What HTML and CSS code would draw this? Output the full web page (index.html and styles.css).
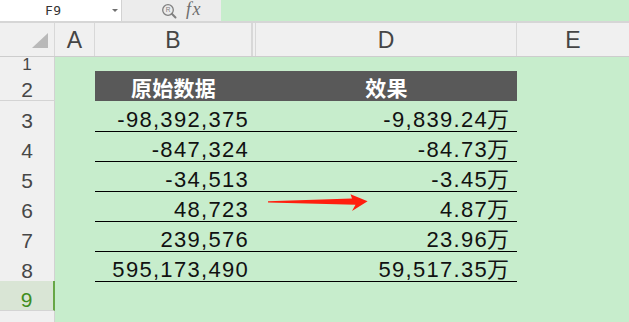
FILE: index.html
```html
<!DOCTYPE html>
<html>
<head>
<meta charset="utf-8">
<link rel="stylesheet" href="styles.css">
</head>
<body>
<div class="fbar">
  <div class="namebox"><span class="ref">F9</span><span class="dd"></span></div>
  <div class="tools">
    <svg class="mag" width="17" height="16" viewBox="0 0 17 16">
      <circle cx="7" cy="7" r="5.3" fill="none" stroke="#808080" stroke-width="1.3"/>
      <text x="7" y="9.3" font-size="6.5" font-family="Liberation Sans, sans-serif" text-anchor="middle" fill="#808080">R</text>
      <line x1="10.8" y1="10.8" x2="14.5" y2="14.5" stroke="#808080" stroke-width="2" stroke-linecap="round"/>
    </svg>
    <span class="fx">fx</span>
  </div>
  <div class="finput"></div>
</div>
<div class="sheet">
  <div class="row colhead">
    <div class="corner"><span class="tri"></span></div>
    <div class="ch">A</div>
    <div class="ch">B</div>
    <div class="ch hid"></div>
    <div class="ch">D</div>
    <div class="ch last">E</div>
  </div>
  <div class="row r1">
    <div class="rh">1</div><div class="c"></div><div class="c"></div><div class="c"></div><div class="c"></div><div class="c"></div>
  </div>
  <div class="row">
    <div class="rh">2</div><div class="c"></div>
    <div class="c hd">原始数据</div><div class="c hd"></div><div class="c hd">效果</div><div class="c"></div>
  </div>
  <div class="row">
    <div class="rh">3</div><div class="c"></div>
    <div class="c ul num">-98,392,375</div><div class="c ul"></div><div class="c ul num dnum">-9,839.24<span class="wan">万</span></div><div class="c"></div>
  </div>
  <div class="row">
    <div class="rh">4</div><div class="c"></div>
    <div class="c ul num">-847,324</div><div class="c ul"></div><div class="c ul num dnum">-84.73<span class="wan">万</span></div><div class="c"></div>
  </div>
  <div class="row">
    <div class="rh">5</div><div class="c"></div>
    <div class="c ul num">-34,513</div><div class="c ul"></div><div class="c ul num dnum">-3.45<span class="wan">万</span></div><div class="c"></div>
  </div>
  <div class="row">
    <div class="rh">6</div><div class="c"></div>
    <div class="c ul num">48,723</div><div class="c ul"></div><div class="c ul num dnum">4.87<span class="wan">万</span></div><div class="c"></div>
  </div>
  <div class="row">
    <div class="rh">7</div><div class="c"></div>
    <div class="c ul num">239,576</div><div class="c ul"></div><div class="c ul num dnum">23.96<span class="wan">万</span></div><div class="c"></div>
  </div>
  <div class="row">
    <div class="rh">8</div><div class="c"></div>
    <div class="c ul num">595,173,490</div><div class="c ul"></div><div class="c ul num dnum">59,517.35<span class="wan">万</span></div><div class="c"></div>
  </div>
  <div class="row">
    <div class="rh sel">9</div><div class="c"></div><div class="c"></div><div class="c"></div><div class="c"></div><div class="c"></div>
  </div>
  <div class="row">
    <div class="rh">10</div><div class="c"></div><div class="c"></div><div class="c"></div><div class="c"></div><div class="c"></div>
  </div>
  <svg class="arrow" width="110" height="24" viewBox="262 190 110 24">
    <path d="M268,201.2 L352,198.4 L350.5,194.2 L367.6,201.3 L352,211 L355.5,204.8 L268,202.4 Z" fill="#ff1e0e"/>
  </svg>
</div>
</body>
</html>
```

FILE: styles.css
```css
* { box-sizing: border-box; }
html, body {
  margin: 0;
  padding: 0;
  width: 629px;
  height: 322px;
  overflow: hidden;
  background: #c7edcc;
  font-family: "Liberation Sans", "Noto Sans CJK SC", sans-serif;
}
.fbar {
  display: flex;
  height: 23px;
  border-bottom: 2px solid #d6d6d6;
  background: #ececec;
}
.namebox {
  width: 122px;
  height: 21px;
  background: #ffffff;
  border-right: 1px solid #d2d2d2;
  display: flex;
  align-items: center;
  padding-left: 45px;
}
.ref {
  font-family: "DejaVu Sans Mono", monospace;
  font-size: 13px;
  color: #333;
  letter-spacing: 0.5px;
}
.dd {
  margin-left: auto;
  margin-right: 3px;
  width: 0;
  height: 0;
  border-left: 3px solid transparent;
  border-right: 3px solid transparent;
  border-top: 3px solid #707070;
}
.tools {
  width: 99px;
  height: 21px;
  display: flex;
  align-items: center;
  padding-left: 39px;
  background: #ececec;
}
.mag { display: block; margin-top: 1px; }
.fx {
  font-family: "Liberation Serif", serif;
  font-style: italic;
  font-size: 18px;
  color: #6e6e6e;
  margin-left: 8px;
  margin-top: -2px;
  letter-spacing: 1.5px;
}
.finput {
  flex: 1;
  height: 21px;
  background: #c7edcc;
}
.sheet {
  position: relative;
}
.row {
  display: grid;
  grid-template-columns: 55px 40px 157px 4px 261px 1fr;
  height: 30px;
}
.colhead {
  height: 34px;
  background: #f0f0f0;
  border-bottom: 1px solid #cdcdcd;
}
.corner {
  border-right: 1px solid #d8d8d8;
  position: relative;
}
.tri {
  position: absolute;
  left: 32px;
  top: 10px;
  width: 0;
  height: 0;
  border-left: 16px solid transparent;
  border-bottom: 15px solid #b9b9b9;
}
.ch {
  border-right: 1px solid #d8d8d8;
  display: flex;
  justify-content: center;
  align-items: center;
  font-size: 23px;
  color: #454545;
  padding-top: 2px;
}
.ch.hid { border-left: 1px solid #d8d8d8; }
.ch.last { border-right: none; }
.r1 { height: 14px; }
.rh {
  background: #f0f0f0;
  border-bottom: 1px solid #d4d4d4;
  border-right: 1px solid #d2d2d2;
  display: flex;
  justify-content: center;
  align-items: flex-end;
  font-size: 21px;
  line-height: 21px;
  color: #474747;
  overflow: hidden;
}
.r1 .rh {
  font-size: 17px;
  line-height: 13px;
  align-items: center;
  padding-top: 1px;
  overflow: visible;
}
.rh.sel {
  background: #d9e5d5;
  color: #3f8d1e;
  border-right: 2px solid #67a746;
}
.c {
  display: flex;
  align-items: flex-end;
  justify-content: flex-end;
}
.hd {
  background: #595959;
  color: #ffffff;
  justify-content: center;
  align-items: center;
  font-family: "Noto Sans CJK SC", sans-serif;
  font-weight: 700;
  font-size: 21px;
  letter-spacing: 0.3px;
  line-height: 24px;
  padding-top: 2px;
}
.ul { border-bottom: 1px solid #000; }
.num {
  display: block;
  text-align: right;
  padding-top: 8px;
  font-size: 22px;
  line-height: 22px;
  letter-spacing: 1.3px;
  color: #111;
  padding-right: 3px;
  white-space: nowrap;
}
.dnum { padding-right: 8px; }
.wan {
  font-family: "Noto Sans CJK SC", sans-serif;
  font-size: 22px;
  letter-spacing: 0;
  line-height: 0;
  margin-left: -1px;
}
.arrow {
  position: absolute;
  left: 262px;
  top: 167px;
}
```
